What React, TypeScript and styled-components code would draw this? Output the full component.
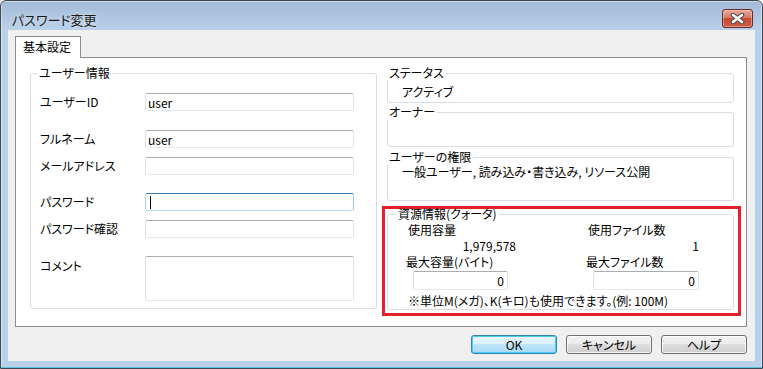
import { createGlobalStyle, styled } from "styled-components";

const GlobalStyle = createGlobalStyle`
  html, body {
    margin: 0;
    padding: 0;
    background: #ffffff;
  }
  body {
    font-family: "Noto Sans CJK JP", "Noto Sans", sans-serif;
    font-size: 12px;
    color: #000;
    font-feature-settings: "palt";
  }
  * {
    box-sizing: border-box;
  }
`;

const Window = styled.div`
  width: 763px;
  height: 369px;
  display: flex;
  flex-direction: column;
  border: 1px solid #3e4954;
  border-radius: 6px 6px 0 0;
  background: linear-gradient(#a2bad6, #b9d1ea 30px);
  box-shadow: inset 0 -1px 0 #5ec4d8, inset 0 0 0 1px rgba(255, 255, 255, 0.45);
  overflow: hidden;
`;

const TitleBar = styled.div`
  height: 29px;
  flex: none;
  display: flex;
  align-items: flex-start;
  justify-content: space-between;
  padding: 8px 9px 0 11px;
`;

const Title = styled.h1`
  margin: 2px 0 0;
  font-size: 13px;
  font-weight: normal;
  line-height: 18px;
  color: #1b1b1b;
  text-shadow: 0 0 6px rgba(255, 255, 255, 0.8);
`;

const CloseButton = styled.button`
  width: 31px;
  height: 19px;
  padding: 0;
  display: flex;
  align-items: center;
  justify-content: center;
  border: 1px solid #6b2a24;
  border-radius: 3px;
  background: linear-gradient(#eaa89b, #d67a69 45%, #c44a31 50%, #cc5c43 100%);
  box-shadow: inset 0 0 0 1px rgba(255, 220, 210, 0.45);
`;

const Client = styled.div`
  flex: 1;
  margin: 0 7px 7px;
  background: #f0f0f0;
  display: flex;
  flex-direction: column;
  padding: 6px 8px 7px 7px;
`;

const TabStrip = styled.div`
  display: flex;
  flex: none;
`;

const Tab = styled.div`
  position: relative;
  z-index: 1;
  height: 22px;
  margin-bottom: -1px;
  padding: 0 9px 0 7px;
  line-height: 20px;
  border: 1px solid #898c95;
  border-bottom: none;
  background: #ffffff;
`;

const TabPanel = styled.div`
  flex: 1;
  display: grid;
  grid-template-columns: 347px 347px;
  column-gap: 10px;
  align-items: start;
  padding: 8px 0 0 14px;
  border: 1px solid #898c95;
  background: #ffffff;
`;

const Group = styled.fieldset<{ $pad: string }>`
  margin: 0;
  min-width: 0;
  padding: ${(p) => p.$pad};
  border: 1px solid #d5dfe5;
  border-radius: 3px;
`;

const Legend = styled.legend<{ $inset: number }>`
  margin-left: ${(p) => p.$inset}px;
  padding: 0 2px;
  line-height: 14px;
`;

const FieldRow = styled.div<{ $top: number; $align?: string }>`
  display: flex;
  align-items: ${(p) => p.$align ?? "center"};
  margin-top: ${(p) => p.$top}px;
`;

const FieldLabel = styled.span<{ $pt?: number }>`
  width: 105px;
  flex: none;
  line-height: 14px;
  padding-top: ${(p) => p.$pt ?? 0}px;
`;

const TextBox = styled.input<{ $focused?: boolean }>`
  width: 209px;
  height: 18px;
  display: flex;
  align-items: center;
  margin: 0;
  padding: 0 2px;
  font: inherit;
  font-size: 12px;
  color: #000;
  background: #ffffff;
  border: 1px solid;
  border-radius: 2px;
  border-color: ${(p) =>
    p.$focused ? "#3d7bad #a4c9e3 #b7d9ed #b5cfe7" : "#abadb3 #e2e3ea #e3e9ef #dbdfe6"};
  outline: none;
`;

const Caret = styled.span`
  width: 1px;
  height: 13px;
  margin-left: 2px;
  background: #000;
`;

const CommentBox = styled.textarea`
  width: 209px;
  height: 45px;
  margin: 0;
  padding: 2px;
  resize: none;
  font: inherit;
  background: #ffffff;
  border: 1px solid;
  border-radius: 2px;
  border-color: #abadb3 #e2e3ea #e3e9ef #dbdfe6;
  outline: none;
`;

const RightColumn = styled.div`
  display: flex;
  flex-direction: column;
`;

const InfoGroup = styled(Group)<{ $top: number }>`
  margin-top: ${(p) => p.$top}px;
`;

const InfoBody = styled.div<{ $h: number; $pt: number }>`
  height: ${(p) => p.$h}px;
  padding-top: ${(p) => p.$pt}px;
  line-height: 14px;
`;

const Highlight = styled.div`
  margin: 5px -7px 0 -5px;
  padding: 0 4px 3px 2px;
  border: 3px solid #e5202b;
`;

const QuotaGroup = styled(Group)`
  margin-top: -2px;
`;

const QuotaGrid = styled.div`
  display: grid;
  grid-template-columns: 180px 1fr;
`;

const QuotaColumn = styled.div`
  display: flex;
  flex-direction: column;
  align-items: flex-start;
`;

const QuotaLabel = styled.span<{ $indent: number }>`
  line-height: 16px;
  padding-left: ${(p) => p.$indent}px;
`;

const QuotaValue = styled.span<{ $w: number }>`
  width: ${(p) => p.$w}px;
  line-height: 16px;
  text-align: right;
`;

const NumberBox = styled.input<{ $w: number }>`
  width: ${(p) => p.$w}px;
  height: 19px;
  margin: 1px 0 0 7px;
  padding: 0 3px;
  font: inherit;
  text-align: right;
  background: #ffffff;
  border: 1px solid;
  border-radius: 2px;
  border-color: #abadb3 #e2e3ea #e3e9ef #dbdfe6;
  outline: none;
`;

const QuotaNote = styled.p`
  margin: 4px 0 0 2px;
  line-height: 14px;
`;

const ButtonRow = styled.div`
  flex: none;
  display: flex;
  justify-content: flex-end;
  gap: 9px;
  margin-top: 8px;
`;

const DialogButton = styled.button<{ $primary?: boolean }>`
  width: 86px;
  height: 19px;
  padding: 0;
  font: inherit;
  line-height: 17px;
  color: #000;
  border: 1px solid ${(p) => (p.$primary ? "#3c7fb1" : "#707070")};
  border-radius: 3px;
  background: ${(p) =>
    p.$primary
      ? "linear-gradient(#eaf6fd, #d9f0fc 50%, #bee6fd 50%, #a7d9f5)"
      : "linear-gradient(#f2f2f2, #ebebeb 50%, #dddddd 50%, #cfcfcf)"};
  box-shadow: ${(p) =>
    p.$primary
      ? "inset 0 0 0 1px #48d0f4"
      : "inset 0 0 0 1px rgba(255, 255, 255, 0.75)"};
`;

function CloseGlyph() {
  return (
    <svg width="15" height="11" viewBox="0 0 15 11">
      <path d="M3 2 L12 9 M12 2 L3 9" stroke="#4b4b4b" strokeWidth="4.6" strokeLinecap="round" />
      <path d="M3 2 L12 9 M12 2 L3 9" stroke="#ffffff" strokeWidth="2.6" strokeLinecap="round" />
    </svg>
  );
}

export default function App() {
  return (
    <>
      <GlobalStyle />
      <Window>
        <TitleBar>
          <Title>パスワード変更</Title>
          <CloseButton aria-label="閉じる">
            <CloseGlyph />
          </CloseButton>
        </TitleBar>
        <Client>
          <TabStrip>
            <Tab>基本設定</Tab>
          </TabStrip>
          <TabPanel>
            <Group $pad="13px 0 7px 9px">
              <Legend $inset={-3}>ユーザー情報</Legend>
              <FieldRow $top={0}>
                <FieldLabel>ユーザーID</FieldLabel>
                <TextBox readOnly defaultValue="user" />
              </FieldRow>
              <FieldRow $top={19}>
                <FieldLabel>フルネーム</FieldLabel>
                <TextBox readOnly defaultValue="user" />
              </FieldRow>
              <FieldRow $top={9}>
                <FieldLabel>メールアドレス</FieldLabel>
                <TextBox readOnly defaultValue="" />
              </FieldRow>
              <FieldRow $top={18}>
                <FieldLabel>パスワード</FieldLabel>
                <TextBox as="div" $focused>
                  <Caret />
                </TextBox>
              </FieldRow>
              <FieldRow $top={9}>
                <FieldLabel>パスワード確認</FieldLabel>
                <TextBox readOnly type="password" defaultValue="" />
              </FieldRow>
              <FieldRow $top={18} $align="flex-start">
                <FieldLabel $pt={3}>コメント</FieldLabel>
                <CommentBox readOnly defaultValue="" />
              </FieldRow>
            </Group>

            <RightColumn>
              <InfoGroup $top={0} $pad="0 0 0 14px">
                <Legend $inset={-15}>ステータス</Legend>
                <InfoBody $h={22} $pt={5}>アクティブ</InfoBody>
              </InfoGroup>
              <InfoGroup $top={2} $pad="0 0 0 14px">
                <Legend $inset={-15}>オーナー</Legend>
                <InfoBody $h={27} $pt={0} />
              </InfoGroup>
              <InfoGroup $top={3} $pad="0 0 0 14px">
                <Legend $inset={-15}>ユーザーの権限</Legend>
                <InfoBody $h={36} $pt={1}>
                  一般ユーザー, 読み込み・書き込み, リソース公開
                </InfoBody>
              </InfoGroup>
              <Highlight>
                <QuotaGroup $pad="1px 0 1px 18px">
                  <Legend $inset={-10}>資源情報(クォータ)</Legend>
                  <QuotaGrid>
                    <QuotaColumn>
                      <QuotaLabel $indent={2}>使用容量</QuotaLabel>
                      <QuotaValue $w={110}>1,979,578</QuotaValue>
                      <QuotaLabel $indent={0}>最大容量(バイト)</QuotaLabel>
                      <NumberBox $w={95} readOnly defaultValue="0" />
                    </QuotaColumn>
                    <QuotaColumn>
                      <QuotaLabel $indent={2}>使用ファイル数</QuotaLabel>
                      <QuotaValue $w={113}>1</QuotaValue>
                      <QuotaLabel $indent={0}>最大ファイル数</QuotaLabel>
                      <NumberBox $w={106} readOnly defaultValue="0" />
                    </QuotaColumn>
                  </QuotaGrid>
                  <QuotaNote>※単位M(メガ)、K(キロ)も使用できます。(例: 100M)</QuotaNote>
                </QuotaGroup>
              </Highlight>
            </RightColumn>
          </TabPanel>
          <ButtonRow>
            <DialogButton $primary>OK</DialogButton>
            <DialogButton>キャンセル</DialogButton>
            <DialogButton>ヘルプ</DialogButton>
          </ButtonRow>
        </Client>
      </Window>
    </>
  );
}
